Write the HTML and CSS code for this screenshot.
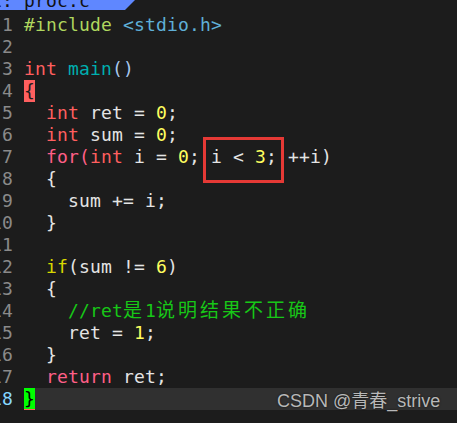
FILE: index.html
```html
<!DOCTYPE html>
<html>
<head>
<meta charset="utf-8">
<link rel="stylesheet" href="styles.css">
</head>
<body>
<div class="tabbar"><div class="tabtext">1: proc.c</div></div>
<div class="editor">
  <div class="line"><span class="ln">1</span><span class="code"><span class="pre">#include</span> <span class="inc">&lt;stdio.h&gt;</span></span></div>
  <div class="line"><span class="ln">2</span><span class="code"></span></div>
  <div class="line"><span class="ln">3</span><span class="code"><span class="type">int</span> <span class="fn">main</span><span class="par">()</span></span></div>
  <div class="line"><span class="ln">4</span><span class="code"><span class="match">{</span></span></div>
  <div class="line"><span class="ln">5</span><span class="code">  <span class="type">int</span> ret = <span class="num">0</span>;</span></div>
  <div class="line"><span class="ln">6</span><span class="code">  <span class="type">int</span> sum = <span class="num">0</span>;</span></div>
  <div class="line"><span class="ln">7</span><span class="code">  <span class="kw">for(</span><span class="type">int</span> i = <span class="num">0</span>; i &lt; <span class="num">3</span>; ++i)</span></div>
  <div class="line"><span class="ln">8</span><span class="code">  {</span></div>
  <div class="line"><span class="ln">9</span><span class="code">    sum += i;</span></div>
  <div class="line"><span class="ln">10</span><span class="code">  }</span></div>
  <div class="line"><span class="ln">11</span><span class="code"></span></div>
  <div class="line"><span class="ln">12</span><span class="code">  <span class="cond">if</span>(sum != <span class="num">6</span>)</span></div>
  <div class="line"><span class="ln">13</span><span class="code">  {</span></div>
  <div class="line"><span class="ln">14</span><span class="code">    <span class="cmt">//ret<span class="cjk">是</span>1<span class="cjk">说明结果不正确</span></span></span></div>
  <div class="line"><span class="ln">15</span><span class="code">    ret = <span class="num">1</span>;</span></div>
  <div class="line"><span class="ln">16</span><span class="code">  }</span></div>
  <div class="line"><span class="ln">17</span><span class="code">  <span class="ret">return</span> ret;</span></div>
  <div class="line current"><span class="ln">18</span><span class="code"><span class="cursor">}</span></span></div>
</div>
<div class="annot"></div>
<div class="watermark">CSDN @青春_strive</div>
</body>
</html>
```
FILE: styles.css
```css
html, body {
  margin: 0;
  padding: 0;
  background: #1c1c1c;
  width: 457px;
  height: 423px;
  overflow: hidden;
}
body {
  position: relative;
  font-family: "DejaVu Sans Mono", "Noto Sans CJK SC", monospace;
  font-size: 18px;
  letter-spacing: 0.16px;
  color: #e4e4e4;
}
.tabbar {
  width: 135px;
  height: 10px;
  background: #5f87ff;
  overflow: hidden;
  clip-path: polygon(0 0, 135px 0, 125px 10px, 0 10px);
}
.tabtext {
  margin-top: -10px;
  margin-left: -9px;
  line-height: 22px;
  white-space: pre;
  color: #121212;
}
.editor {
  margin-top: 4px;
  margin-left: -20px;
}
.line {
  display: flex;
  height: 22px;
  line-height: 22px;
  white-space: pre;
}
.ln {
  width: 33px;
  padding-right: 11px;
  text-align: right;
  color: #8a8a8a;
  flex: none;
}
.code {
  flex: 1;
  height: 22px;
}
.current .code { background: #303030; }
.current .ln { color: #87d7ff; }
.pre { color: #afd75f; }
.inc { color: #5fafd7; }
.type { color: #ff5f5f; }
.kw { color: #ff5f87; }
.ret { color: #ff5f87; }
.fn { color: #00afaf; }
.par { color: #a8c8ee; }
.num { color: #ffff5f; }
.cond { color: #d7d700; }
.cmt { color: #17c717; }
.cjk {
  font-size: 19px;
  letter-spacing: 3px;
  line-height: 0;
}
.match {
  display: inline-block;
  background: #ff5f5f;
  color: #1c1c1c;
  height: 22px;
}
.cursor {
  display: inline-block;
  background: #00ff00;
  color: #000;
  height: 21px;
  border-bottom: 1px solid #ff5f5f;
}
.annot {
  position: absolute;
  left: 203px;
  top: 137px;
  width: 75px;
  height: 40px;
  border: 3px solid #e53935;
}
.watermark {
  position: absolute;
  left: 277px;
  top: 392px;
  font-family: "Liberation Sans", "Noto Sans CJK SC", sans-serif;
  font-size: 18px;
  line-height: 18px;
  letter-spacing: 0;
  color: #b8b8b8;
  text-shadow: 0 0 2px #111;
  white-space: nowrap;
}
```
